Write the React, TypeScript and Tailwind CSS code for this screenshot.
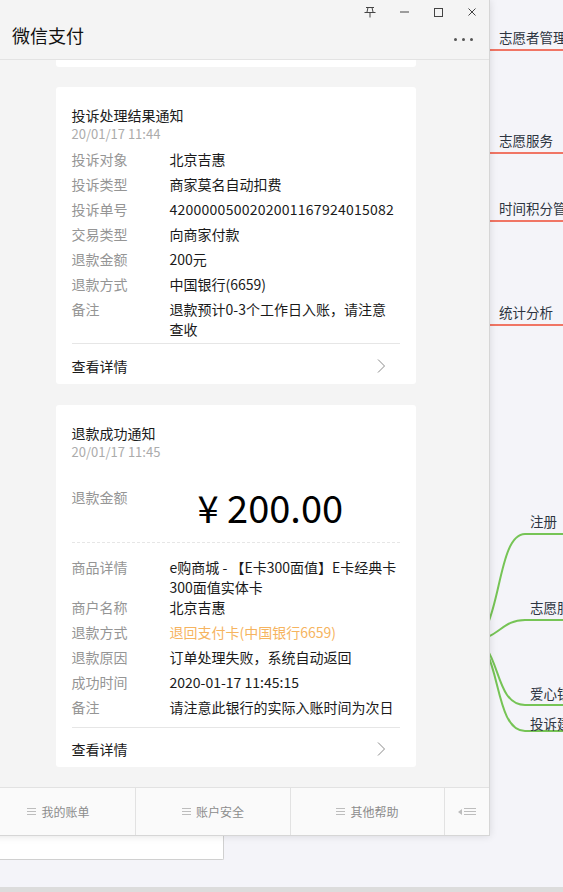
import React from "react";

function Row({ label, children, valueClass }: { label: string; children: React.ReactNode; valueClass?: string }) {
  return (
    <div className="flex text-[14px] leading-[20px]">
      <div className="w-[98px] shrink-0 text-[#959595]">{label}</div>
      <div className={valueClass ?? "text-[#1a1a1a] whitespace-nowrap"}>{children}</div>
    </div>
  );
}

function Chevron() {
  return (
    <svg width="9" height="14" viewBox="0 0 9 14" fill="none">
      <path d="M1 0.5 L7.5 7 L1 13.5" stroke="#8a8a8a" strokeWidth="1" />
    </svg>
  );
}

function Lines({ w = 9 }: { w?: number }) {
  return (
    <svg width={w} height="9" viewBox={`0 0 ${w} 9`}>
      <path d={`M0 1.5H${w} M0 4.5H${w} M0 7.5H${w}`} stroke="#bdbdbd" strokeWidth="1" />
    </svg>
  );
}

function Footer({ pt }: { pt: string }) {
  return (
    <div className={`flex h-[39px] items-center justify-between pl-[16px] pr-[30px] ${pt}`}>
      <span className="text-[14px] leading-[20px] text-[#1a1a1a]">查看详情</span>
      <Chevron />
    </div>
  );
}

export default function App() {
  return (
    <div className="relative flex h-[892px] w-[563px] flex-col overflow-hidden bg-[#f4f4f9] font-['Noto_Sans_CJK_SC','Noto_Sans',sans-serif]">
      {/* mind map canvas behind */}
      <div className="absolute left-[499px] top-[27px] whitespace-nowrap text-[13.5px] leading-[20px] text-[#2d3441]">志愿者管理</div>
      <div className="absolute left-[480px] top-[49px] h-[2px] w-[90px] bg-[#f07565]" />
      <div className="absolute left-[499px] top-[130px] whitespace-nowrap text-[13.5px] leading-[20px] text-[#2d3441]">志愿服务</div>
      <div className="absolute left-[480px] top-[152px] h-[2px] w-[90px] bg-[#f07565]" />
      <div className="absolute left-[499px] top-[198px] whitespace-nowrap text-[13.5px] leading-[20px] text-[#2d3441]">时间积分管理</div>
      <div className="absolute left-[480px] top-[220px] h-[2px] w-[90px] bg-[#f07565]" />
      <div className="absolute left-[499px] top-[302px] whitespace-nowrap text-[13.5px] leading-[20px] text-[#2d3441]">统计分析</div>
      <div className="absolute left-[480px] top-[324px] h-[2px] w-[90px] bg-[#f07565]" />

      <svg className="absolute left-[440px] top-[500px]" width="123" height="260" viewBox="0 0 123 260" fill="none">
        <g stroke="#76c456" strokeWidth="2">
          <path d="M30 140 C62 140 55 34 85 34 H123" />
          <path d="M30 140 C60 140 60 120 85 120 H123" />
          <path d="M30 140 C62 140 52 205 85 205 H123" />
          <path d="M30 140 C62 140 52 231 85 231 H123" />
        </g>
      </svg>
      <div className="absolute left-[530px] top-[511px] whitespace-nowrap text-[13.5px] leading-[20px] text-[#2d3441]">注册</div>
      <div className="absolute left-[530px] top-[597px] whitespace-nowrap text-[13.5px] leading-[20px] text-[#2d3441]">志愿服务</div>
      <div className="absolute left-[530px] top-[683px] whitespace-nowrap text-[13.5px] leading-[20px] text-[#2d3441]">爱心银行</div>
      <div className="absolute left-[530px] top-[713px] whitespace-nowrap text-[13.5px] leading-[20px] text-[#2d3441]">投诉建议</div>

      {/* main window */}
      <div className="relative z-10 ml-[-18px] flex w-[508px] shrink-0 flex-col border-r border-b border-[#d6d6d6] bg-[#f4f4f4] shadow-[0_0_8px_rgba(0,0,0,0.12)]">
        {/* header */}
        <div className="flex h-[60px] flex-col border-b border-[#e3e3e3]">
          <div className="flex h-[24px] items-center justify-end">
            <div className="flex w-[34px] justify-center">
              <svg width="12" height="11" viewBox="0 0 12 11" fill="none">
                <path d="M2 0.5H10 M4 0.5L3 5 M8 0.5L9 5 M0.5 5.5H11.5 M6 5.5V10.5" stroke="#444" strokeWidth="1" />
              </svg>
            </div>
            <div className="flex w-[34px] justify-center">
              <svg width="9" height="2" viewBox="0 0 9 2"><path d="M0 1H9" stroke="#444" strokeWidth="1" /></svg>
            </div>
            <div className="flex w-[34px] justify-center">
              <svg width="9" height="9" viewBox="0 0 9 9" fill="none"><rect x="0.5" y="0.5" width="8" height="8" stroke="#444" strokeWidth="1" /></svg>
            </div>
            <div className="flex w-[34px] justify-center">
              <svg width="8" height="8" viewBox="0 0 8 8" fill="none"><path d="M0.5 0.5L7.5 7.5 M7.5 0.5L0.5 7.5" stroke="#444" strokeWidth="1" /></svg>
            </div>
          </div>
          <div className="flex items-start justify-between pl-[30px] pr-[16px]">
            <span className="mt-[-1px] text-[18px] leading-[24px] text-[#111]">微信支付</span>
            <div className="mt-[14px] flex gap-[5px]">
              <span className="h-[3px] w-[3px] rounded-full bg-[#555]" />
              <span className="h-[3px] w-[3px] rounded-full bg-[#555]" />
              <span className="h-[3px] w-[3px] rounded-full bg-[#555]" />
            </div>
          </div>
        </div>

        {/* content */}
        <div className="flex flex-col items-center">
          <div className="h-[7px] w-[360px] rounded-b-[3px] bg-white" />

          {/* card 1 */}
          <div className="mt-[20px] flex h-[297px] w-[360px] flex-col rounded-[3px] bg-white">
            <div className="px-[16px] pt-[18px]">
              <div className="text-[14px] leading-[20px] text-[#1a1a1a]">投诉处理结果通知</div>
              <div className="text-[13px] leading-[18px] text-[#ababab]">20/01/17 11:44</div>
              <div className="mt-[6px] flex flex-col gap-[5px]">
                <Row label="投诉对象">北京吉惠</Row>
                <Row label="投诉类型">商家莫名自动扣费</Row>
                <Row label="投诉单号" valueClass="text-[#1a1a1a] whitespace-nowrap tracking-[0.25px]">4200000500202001167924015082</Row>
                <Row label="交易类型">向商家付款</Row>
                <Row label="退款金额">200元</Row>
                <Row label="退款方式">中国银行(6659)</Row>
                <Row label="备注">
                  退款预计0-3个工作日入账，请注意
                  <br />
                  查收
                </Row>
              </div>
              <div className="mt-[4px] h-px bg-[#e6e6e6]" />
            </div>
            <Footer pt="pt-[4px]" />
          </div>

          {/* card 2 */}
          <div className="mt-[21px] flex h-[362px] w-[360px] flex-col rounded-[3px] bg-white">
            <div className="px-[16px] pt-[18px]">
              <div className="text-[14px] leading-[20px] text-[#1a1a1a]">退款成功通知</div>
              <div className="text-[13px] leading-[18px] text-[#ababab]">20/01/17 11:45</div>
              <div className="mt-[26px] flex items-start">
                <div className="w-[98px] shrink-0 text-[14px] leading-[20px] text-[#959595]">退款金额</div>
                <div className="ml-[28px] whitespace-nowrap text-[38px] leading-[40px] text-black">¥ 200.00</div>
              </div>
              <div className="mt-[15px] border-t border-dashed border-[#e6e6e6]" />
              <div className="mt-[14px] flex flex-col">
                <Row label="商品详情">
                  e购商城 - 【E卡300面值】E卡经典卡
                  <br />
                  300面值实体卡
                </Row>
                <div className="flex flex-col gap-[5px]">
                  <Row label="商户名称">北京吉惠</Row>
                  <Row label="退款方式" valueClass="text-[#f6b45f] whitespace-nowrap">退回支付卡(中国银行6659)</Row>
                  <Row label="退款原因">订单处理失败，系统自动返回</Row>
                  <Row label="成功时间">2020-01-17 11:45:15</Row>
                  <Row label="备注">请注意此银行的实际入账时间为次日</Row>
                </div>
              </div>
              <div className="mt-[10px] h-px bg-[#e6e6e6]" />
            </div>
            <Footer pt="pt-[2px]" />
          </div>
        </div>

        {/* bottom nav */}
        <div className="mt-[20px] flex h-[48px] border-t border-[#e2e2e2] bg-[#fafafa] text-[12px] text-[#8c8c8c]">
          <div className="flex w-[154px] items-center justify-center gap-[5px] border-r border-[#e2e2e2]">
            <Lines />
            <span>我的账单</span>
          </div>
          <div className="flex w-[155px] items-center justify-center gap-[5px] border-r border-[#e2e2e2]">
            <Lines />
            <span>账户安全</span>
          </div>
          <div className="flex w-[154px] items-center justify-center gap-[5px] border-r border-[#e2e2e2]">
            <Lines />
            <span>其他帮助</span>
          </div>
          <div className="flex flex-1 items-center justify-center gap-[2px]">
            <svg width="4" height="6" viewBox="0 0 4 6"><path d="M0 3L4 0V6Z" fill="#bdbdbd" /></svg>
            <Lines w={12} />
          </div>
        </div>
      </div>

      {/* window behind */}
      <div className="h-[24px] w-[224px] shrink-0 rounded-br-[2px] border-r border-b border-[#d0d0d0] bg-white" />
      <div className="flex-1" />
      <div className="h-[5px] shrink-0 bg-[#dcdcdc]" />
    </div>
  );
}
